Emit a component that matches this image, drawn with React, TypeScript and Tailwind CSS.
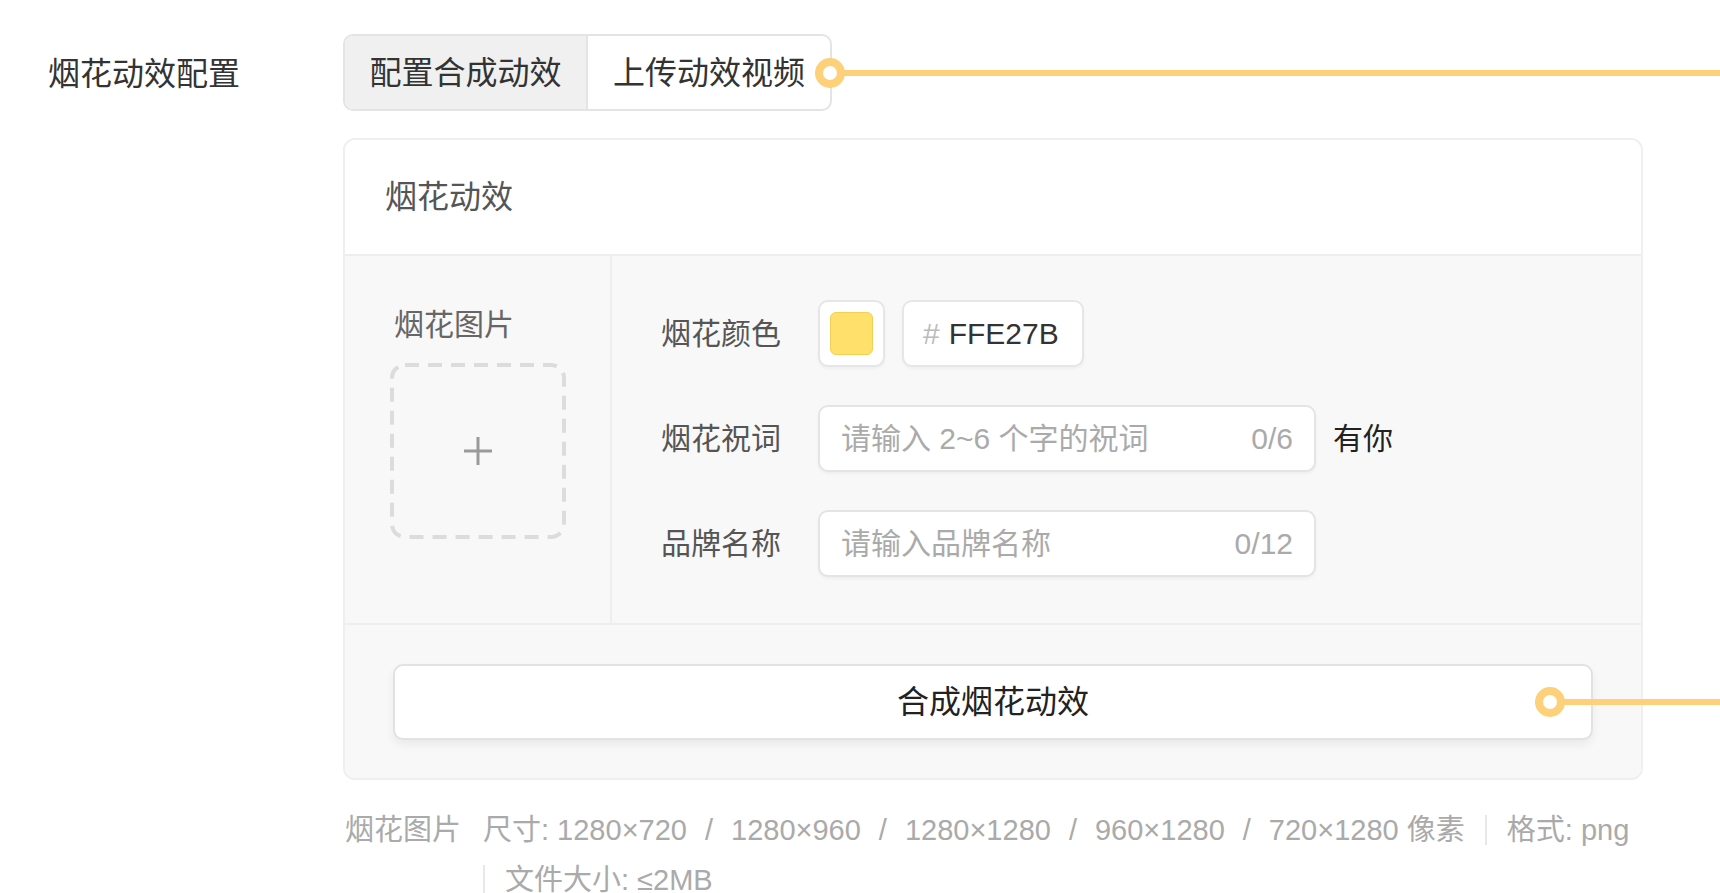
import React from "react";

function Connector() {
    return (
        <div className="flex items-center pointer-events-none">
            <div className="w-[30px] h-[30px] rounded-full border-[8px] border-[#fdd079] bg-white shrink-0"></div>
            <div className="h-[6px] w-[1000px] bg-[#fdd079] -ml-[1px]"></div>
        </div>
    );
}

function Sep() {
    return <span className="inline-block w-[2px] h-[30px] bg-[#e8e8e8] mr-[20px] self-center"></span>;
}

function Slash() {
    return <span className="mx-[18px]">/</span>;
}

export default function App() {
    return (
        <div className="min-h-screen bg-white overflow-hidden pt-[34px] pl-[48px] font-['Liberation_Sans','Noto_Sans_CJK_SC',sans-serif]">
            {/* Top row */}
            <div className="flex items-center">
                <div className="w-[295px] text-[32px] text-[#333] pt-[3px]">烟花动效配置</div>
                <div className="relative flex h-[77px] rounded-[10px] border-2 border-[#e4e4e4]">
                    <div className="w-[243px] flex items-center justify-center bg-[#f0f0f0] rounded-l-[8px] border-r-2 border-[#e4e4e4] text-[32px] text-[#333]">
                        配置合成动效
                    </div>
                    <div className="w-[242px] flex items-center justify-center text-[32px] text-[#333]">上传动效视频</div>
                    <div className="absolute left-[calc(100%-15px)] top-1/2 -translate-y-1/2 z-10">
                        <Connector />
                    </div>
                </div>
            </div>

            {/* Card */}
            <div className="mt-[27px] ml-[295px] w-[1300px] rounded-[12px] border-2 border-[#efefef]">
                <div className="h-[116px] flex items-center pl-[40px] bg-white rounded-t-[10px] border-b-2 border-[#eeeeee] text-[32px] text-[#555]">
                    烟花动效
                </div>
                <div className="flex h-[369px] bg-[#f8f8f8] border-b-2 border-[#eeeeee]">
                    <div className="w-[267px] border-r-2 border-[#eeeeee] pl-[45px] pt-[48px]">
                        <div className="text-[30px] leading-[42px] text-[#666] pl-[4px]">烟花图片</div>
                        <div className="relative mt-[17px] w-[176px] h-[176px] flex items-center justify-center">
                            <svg className="absolute inset-0" width="176" height="176" viewBox="0 0 176 176">
                                <rect
                                    x="2"
                                    y="2"
                                    width="172"
                                    height="172"
                                    rx="13"
                                    fill="none"
                                    stroke="#dcdcdc"
                                    strokeWidth="4"
                                    strokeDasharray="14 9"
                                />
                            </svg>
                            <svg width="32" height="32" viewBox="0 0 32 32">
                                <path d="M16 2v28M2 16h28" stroke="#9a9a9a" strokeWidth="3" />
                            </svg>
                        </div>
                    </div>
                    <div className="flex-1 pl-[49px] pt-[44px] flex flex-col gap-[38px]">
                        <div className="flex items-center h-[67px]">
                            <div className="w-[157px] text-[30px] text-[#555]">烟花颜色</div>
                            <div className="w-[67px] h-[67px] rounded-[10px] border-2 border-[#e6e6e6] bg-white flex items-center justify-center shadow-[0_2px_3px_rgba(0,0,0,0.04)]">
                                <div className="w-[43px] h-[43px] rounded-[6px] bg-[#ffe06b] border border-[#f2cf55]"></div>
                            </div>
                            <div className="ml-[17px] w-[182px] h-[67px] rounded-[10px] border-2 border-[#e6e6e6] bg-white flex items-center pl-[19px] text-[30px] shadow-[0_2px_3px_rgba(0,0,0,0.04)]">
                                <span className="text-[#bbb]">#</span>
                                <span className="ml-[9px] text-[#333]">FFE27B</span>
                            </div>
                        </div>
                        <div className="flex items-center h-[67px]">
                            <div className="w-[157px] text-[30px] text-[#555]">烟花祝词</div>
                            <div className="w-[498px] h-[67px] rounded-[10px] border-2 border-[#e4e4e4] bg-white flex items-center justify-between px-[21px] text-[30px] text-[#aaa] shadow-[0_2px_3px_rgba(0,0,0,0.04)]">
                                <span>请输入 2~6 个字的祝词</span>
                                <span>0/6</span>
                            </div>
                            <div className="ml-[17px] text-[30px] text-[#222]">有你</div>
                        </div>
                        <div className="flex items-center h-[67px]">
                            <div className="w-[157px] text-[30px] text-[#555]">品牌名称</div>
                            <div className="w-[498px] h-[67px] rounded-[10px] border-2 border-[#e4e4e4] bg-white flex items-center justify-between px-[21px] text-[30px] text-[#aaa] shadow-[0_2px_3px_rgba(0,0,0,0.04)]">
                                <span>请输入品牌名称</span>
                                <span>0/12</span>
                            </div>
                        </div>
                    </div>
                </div>
                <div className="bg-[#f8f8f8] rounded-b-[10px] px-[48px] pt-[39px] pb-[38px]">
                    <div className="relative h-[76px] rounded-[10px] border-2 border-[#e2e2e2] bg-white shadow-[0_5px_10px_rgba(0,0,0,0.06)] flex items-center justify-center text-[32px] text-[#222]">
                        合成烟花动效
                        <div className="absolute left-[1140px] top-1/2 -translate-y-1/2 z-10">
                            <Connector />
                        </div>
                    </div>
                </div>
            </div>

            {/* Hint */}
            <div className="mt-[25px] ml-[297px] flex text-[29px] leading-[50px] text-[#aaa]">
                <div className="w-[138px] shrink-0">烟花图片</div>
                <div className="w-[1180px] flex flex-wrap">
                    <span className="flex mr-[20px]">
                        尺寸: 1280×720<Slash />1280×960<Slash />1280×1280<Slash />960×1280<Slash />720×1280 像素
                    </span>
                    <span className="flex mr-[20px]">
                        <Sep />
                        格式: png
                    </span>
                    <span className="flex mr-[20px]">
                        <Sep />
                        文件大小: ≤2MB
                    </span>
                </div>
            </div>
        </div>
    );
}
